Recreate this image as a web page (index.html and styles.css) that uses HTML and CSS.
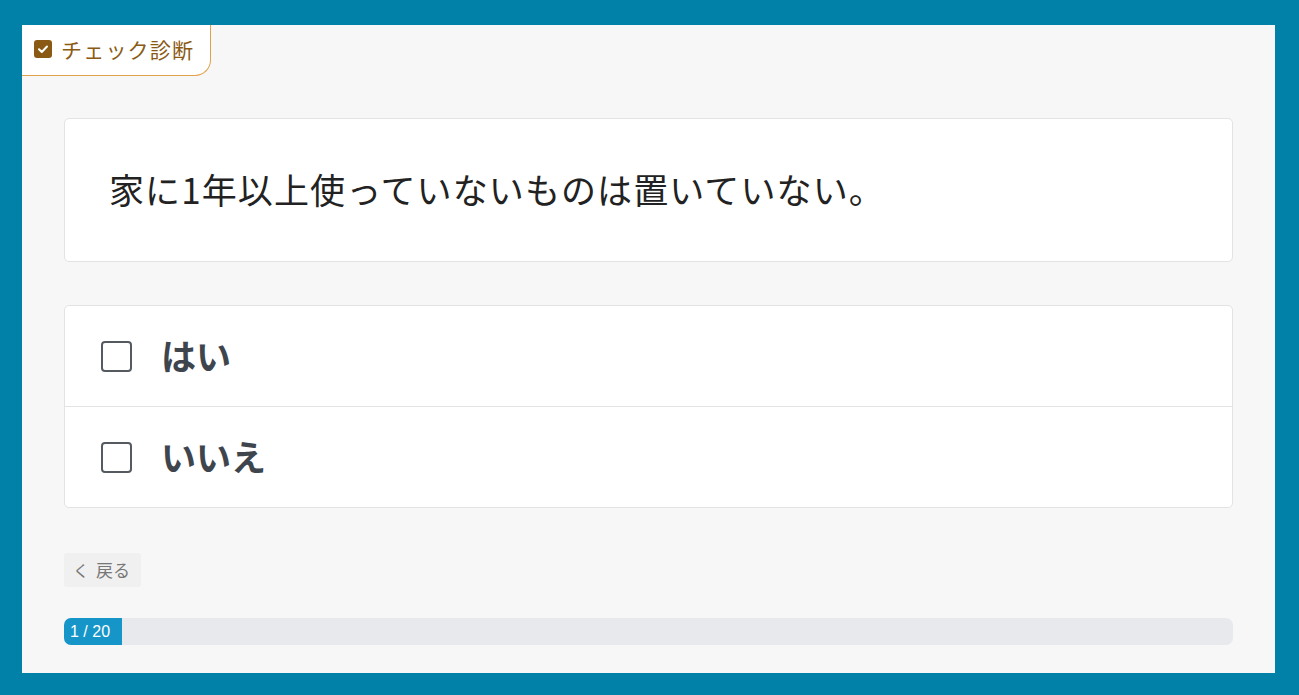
FILE: index.html
```html
<!DOCTYPE html>
<html lang="ja">
<head>
    <meta charset="UTF-8">
    <meta name="viewport" content="width=device-width, initial-scale=1.0">
    <title>チェック診断</title>
    <link rel="stylesheet" href="styles.css">
</head>
<body>

<div class="panel">
    <div class="badge">
        <svg class="badge-icon" viewBox="0 0 18 18" width="18" height="18">
            <rect x="0" y="0" width="18" height="18" rx="3" fill="#8a5a14"/>
            <path d="M5 9.2 L7.8 12 L13 6.5" fill="none" stroke="#fff" stroke-width="2" stroke-linecap="round" stroke-linejoin="round"/>
        </svg>
        <span>チェック診断</span>
    </div>

    <div class="content">
        <div class="question">
            <p>家に1年以上使っていないものは置いていない。</p>
        </div>

        <div class="options">
            <label class="option">
                <span class="box"></span>
                <span class="option-text">はい</span>
            </label>
            <label class="option">
                <span class="box"></span>
                <span class="option-text">いいえ</span>
            </label>
        </div>

        <button class="back" type="button"><span class="chev">く</span>戻る</button>

        <div class="progress">
            <div class="progress-fill" style="width: 5%;">1 / 20</div>
        </div>
    </div>
</div>

</body>
</html>
```

FILE: styles.css
```css
body {
    margin: 0;
    padding: 25px 24px 22px 22px;
    background-color: #0181a8;
    font-family: "Noto Sans CJK JP", "Noto Sans", sans-serif;
    color: #333;
}

.panel {
    background: #f7f7f7;
    height: 648px;
    box-sizing: border-box;
}

.badge {
    display: inline-flex;
    align-items: center;
    gap: 9px;
    height: 51px;
    box-sizing: border-box;
    padding: 0 16px 3px 12px;
    background: #fff;
    border-right: 1px solid #e0a24a;
    border-bottom: 1px solid #e0a24a;
    border-bottom-right-radius: 16px;
    color: #8a5a14;
    font-size: 21px;
    letter-spacing: 1.2px;
}

.badge-icon {
    display: block;
}

.content {
    padding: 42px 42px 0 42px;
}

.question {
    background: #fff;
    border: 1px solid #e3e3e3;
    border-radius: 5px;
    height: 144px;
    box-sizing: border-box;
    display: flex;
    align-items: center;
    padding: 0 44px;
}

.question p {
    margin: 0 0 4px 0;
    font-size: 35px;
    letter-spacing: 1.1px;
    color: #222;
}

.options {
    margin-top: 43px;
    background: #fff;
    border: 1px solid #e3e3e3;
    border-radius: 5px;
}

.option {
    display: flex;
    align-items: center;
    height: 100px;
    padding: 0 36px;
    cursor: pointer;
}

.option + .option {
    border-top: 1px solid #e3e3e3;
}

.box {
    width: 27px;
    height: 27px;
    border: 2px solid #555a60;
    border-radius: 4px;
    margin-right: 29px;
}

.option-text {
    font-size: 35px;
    font-weight: bold;
    color: #3e454d;
    margin-bottom: 4px;
}

.back {
    display: block;
    margin-top: 45px;
    padding: 0 11px 2px 9px;
    height: 34px;
    background: #f0f0f0;
    border: none;
    border-radius: 3px;
    font-family: "Noto Sans CJK JP", sans-serif;
    font-size: 17px;
    color: #777;
    cursor: pointer;
}

.chev {
    font-size: 16px;
    margin-right: 7px;
}

.progress {
    margin-top: 31px;
    height: 27px;
    background: #e7e9ec;
    border-radius: 7px;
    overflow: hidden;
}

.progress-fill {
    height: 100%;
    background: #1595c8;
    color: #fff;
    font-family: "Liberation Sans", Arial, sans-serif;
    font-size: 16px;
    line-height: 27px;
    padding-left: 6px;
    box-sizing: border-box;
    white-space: nowrap;
}
```
